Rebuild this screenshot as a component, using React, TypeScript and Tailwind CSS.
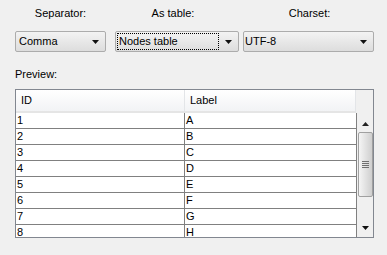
import React from 'react';

const rows = [
  ['1', 'A'],
  ['2', 'B'],
  ['3', 'C'],
  ['4', 'D'],
  ['5', 'E'],
  ['6', 'F'],
  ['7', 'G'],
  ['8', 'H'],
];

function Arrow({ up = false }: { up?: boolean }) {
  return (
    <svg width="7" height="4" viewBox="0 0 7 4" className="block">
      {up ? <path d="M0 4 L3.5 0 L7 4 Z" fill="#222" /> : <path d="M0 0 L7 0 L3.5 4 Z" fill="#111" />}
    </svg>
  );
}

function Combo({ value, width, focused = false, pad = 'pl-[3px]' }: { value: string; width: string; focused?: boolean; pad?: string }) {
  return (
    <div
      className={`${width} h-[21px] flex items-center justify-between border border-[#acacac] rounded-[2px] bg-gradient-to-b from-[#f3f3f3] to-[#dddddd] pr-[6px]`}
    >
      {focused ? (
        <span className="ml-[1px] h-[17px] w-[102px] border border-dotted border-black flex items-center pl-[1px] leading-none">
          {value}
        </span>
      ) : (
        <span className={`${pad} leading-none`}>{value}</span>
      )}
      <Arrow />
    </div>
  );
}

export default function App() {
  return (
    <div
      className="w-[387px] h-[255px] bg-[#f0f0f0] text-[11px] text-black overflow-hidden"
      style={{ fontFamily: '"Liberation Sans", Arial, sans-serif' }}
    >
      <div className="flex pl-[15px] pt-[5px] leading-[16px]">
        <div className="w-[91px] text-center">Separator:</div>
        <div className="w-[124px] ml-[10px] text-center pr-[10px]">As table:</div>
        <div className="w-[131px] ml-[4px] text-center">Charset:</div>
      </div>

      <div className="flex pl-[15px] mt-[10px]">
        <Combo value="Comma" width="w-[91px]" pad="pl-[3px]" />
        <div className="ml-[9px]">
          <Combo value="Nodes table" width="w-[124px]" focused />
        </div>
        <div className="ml-[4px]">
          <Combo value="UTF-8" width="w-[131px]" pad="pl-[1px]" />
        </div>
      </div>

      <div className="pl-[15px] mt-[17px] leading-[11px]">Preview:</div>

      <div className="ml-[15px] mt-[9px] w-[359px] h-[149px] border border-[#828790] bg-white flex flex-col overflow-hidden">
        <div className="flex h-[23px] shrink-0">
          <div className="w-[169px] flex items-center pl-[5px] bg-gradient-to-b from-white to-[#f2f3f5] border-r border-[#e3e5e8] border-b-2 border-b-[#e5e5e5]">
            ID
          </div>
          <div className="w-[171px] flex items-center pl-[5px] bg-gradient-to-b from-white to-[#f2f3f5] border-r border-[#e3e5e8] border-b-2 border-b-[#e5e5e5]">
            Label
          </div>
          <div className="flex-1 bg-[#f0f0f0]" />
        </div>
        <div className="flex flex-1 min-h-0">
          <div className="w-[341px] overflow-hidden">
            {rows.map(([id, label]) => (
              <div key={id} className="flex h-[16px] border-b border-[#808080]">
                <div className="w-[169px] border-r border-[#808080] pl-[1px] leading-[15px]">{id}</div>
                <div className="flex-1 border-r border-[#808080] pl-[1px] leading-[15px]">{label}</div>
              </div>
            ))}
          </div>
          <div className="flex-1 bg-[#f0f0f0] flex flex-col items-center">
            <div className="h-[19px] flex items-center justify-center pt-[2px]">
              <Arrow up />
            </div>
            <div className="w-[15px] h-[65px] rounded-[2px] border border-[#a0a0a0] bg-gradient-to-r from-[#f5f5f5] via-[#e2e2e2] to-[#cfcfcf] flex flex-col items-center justify-center gap-[1px]">
              <div className="w-[7px] h-[1px] bg-[#707070]" />
              <div className="w-[7px] h-[1px] bg-[#707070]" />
              <div className="w-[7px] h-[1px] bg-[#707070]" />
              <div className="w-[7px] h-[1px] bg-[#707070]" />
            </div>
            <div className="flex-1" />
            <div className="h-[16px] flex items-center justify-center pb-[3px]">
              <Arrow />
            </div>
          </div>
        </div>
      </div>
    </div>
  );
}
